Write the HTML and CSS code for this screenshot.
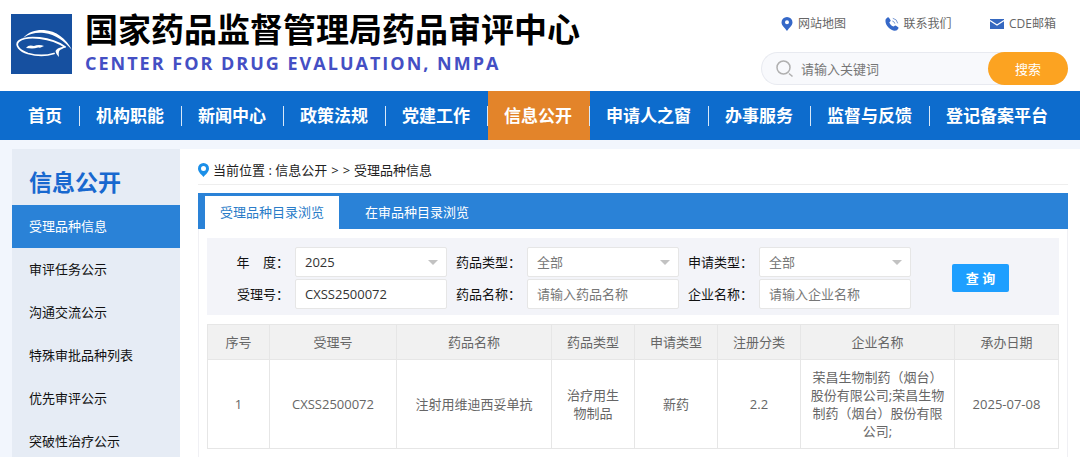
FILE: index.html
```html
<!DOCTYPE html>
<html lang="zh-CN">
<head>
    <meta charset="UTF-8">
    <meta name="viewport" content="width=device-width, initial-scale=1.0">
    <title>国家药品监督管理局药品审评中心</title>
    <link rel="stylesheet" href="styles.css">
</head>
<body>
    <header class="header">
        <div class="brand">
            <svg class="logo" viewBox="0 0 61 60">
                <rect width="61" height="60" fill="#1650a0"/>
                <path fill="#fff" d="M12 24C18 17 26 15.500 33 16C45 17 55 24 61 36C53 27 45 20.500 33 19C25 18.300 19 19.500 12 24z"/>
                <path fill="none" stroke="#fff" stroke-width="1.800" stroke-linecap="round" d="M54 33C40 23 16 21 8 27C3 31 9 37 17 39.500C26 42 35 42 43 39.500"/>
                <path fill="#fff" d="M55 32.500C51 32.500 46 34 44.500 37C45 39.500 46 41 48 43C47.500 40 47.500 37.500 49 36C51 35 53 34 55 32.500z"/>
                <path fill="#fff" d="M15 34C17 31 20 31 23 32C26 30.500 30 30.500 33 32C31 33 30 34 27 33.500C23 35 19 34.500 15 34z"/>
            </svg>
            <div class="brand-text">
                <h1>国家药品监督管理局药品审评中心</h1>
                <p>CENTER FOR DRUG EVALUATION, NMPA</p>
            </div>
        </div>
        <div class="tools">
            <div class="links">
                <a href="#"><svg width="12" height="14" viewBox="0 0 12 14"><path fill="#3568c8" fill-rule="evenodd" d="M6 0a5.500 5.500 0 0 1 5.500 5.500C11.500 8.500 8 11 6 14 4 11 .5 8.500 .5 5.500A5.500 5.500 0 0 1 6 0zm0 3.300a2 2 0 1 0 0 4 2 2 0 0 0 0-4z"/></svg>网站地图</a>
                <a href="#"><svg width="14" height="14" viewBox="0 0 14 14"><path fill="#3568c8" d="M.8 2L2.800 .3Q3.500 0 4 .7L5.600 3.200Q5.800 3.900 5.200 4.400L4.300 5.200C5 7.300 6.500 8.800 8.700 9.600L9.700 8.700Q10.300 8.300 11 8.700L13.200 10.200Q13.800 10.800 13.300 11.500L12 13.300C6.500 15.500-1.300 8 .8 2z"/><path fill="none" stroke="#7b9ad3" d="M7.300 4Q9.500 4.500 9.900 6.700M7.800 1.300Q12 2 12.700 6.300"/></svg>联系我们</a>
                <a href="#"><svg width="14" height="10" viewBox="0 0 14 10"><rect width="14" height="10" fill="#3568c0"/><path fill="none" stroke="#fff" stroke-width="1.200" d="M0 1.500L7 6 14 1.500"/></svg>CDE邮箱</a>
            </div>
            <form class="search">
                <svg width="18" height="18" viewBox="0 0 18 18" fill="none" stroke="#b0b0b0" stroke-width="1.500"><circle cx="7.500" cy="7.500" r="6.500"/><path d="M13 13.500L16.500 16.500"/></svg>
                <input type="text" placeholder="请输入关键词" aria-label="关键词">
                <button type="submit">搜索</button>
            </form>
        </div>
    </header>

    <nav class="nav">
        <a href="#">首页</a>
        <a href="#">机构职能</a>
        <a href="#">新闻中心</a>
        <a href="#">政策法规</a>
        <a href="#">党建工作</a>
        <a href="#" class="active">信息公开</a>
        <a href="#">申请人之窗</a>
        <a href="#">办事服务</a>
        <a href="#">监督与反馈</a>
        <a href="#">登记备案平台</a>
    </nav>

    <div class="main">
        <aside class="sidebar">
            <h2>信息公开</h2>
            <a href="#" class="active">受理品种信息</a>
            <a href="#">审评任务公示</a>
            <a href="#">沟通交流公示</a>
            <a href="#">特殊审批品种列表</a>
            <a href="#">优先审评公示</a>
            <a href="#">突破性治疗公示</a>
        </aside>
        <section class="content">
            <div class="crumb">
                <svg width="11" height="14" viewBox="0 0 11 14"><path fill="#1b8fe8" fill-rule="evenodd" d="M5.500 0A5.500 5.500 0 0 1 11 5.500C11 9 7.500 11.500 5.500 14 3.500 11.500 0 9 0 5.500A5.500 5.500 0 0 1 5.500 0zm0 3a2.500 2.500 0 1 0 0 5 2.500 2.500 0 0 0 0-5z"/></svg>
                <span>当前位置 : <a href="#">信息公开</a></span>
                <span>&gt;</span>
                <span>&gt;</span>
                <a href="#">受理品种信息</a>
            </div>
            <div class="panel">
                <div class="tabs">
                    <a href="#" class="active">受理品种目录浏览</a>
                    <a href="#">在审品种目录浏览</a>
                </div>
                <form class="filter">
                    <div class="fields">
                        <label for="year">年&nbsp;&nbsp;&nbsp;&nbsp;度：</label>
                        <div class="select"><select id="year"><option>2025</option></select></div>
                        <label for="drugType">药品类型：</label>
                        <div class="select"><select id="drugType" class="empty"><option>全部</option></select></div>
                        <label for="applyType">申请类型：</label>
                        <div class="select"><select id="applyType" class="empty"><option>全部</option></select></div>
                        <label for="acceptNo">受理号：</label>
                        <input type="text" id="acceptNo" value="CXSS2500072">
                        <label for="drugName">药品名称：</label>
                        <input type="text" id="drugName" placeholder="请输入药品名称">
                        <label for="company">企业名称：</label>
                        <input type="text" id="company" placeholder="请输入企业名称">
                    </div>
                    <button type="submit">查 询</button>
                </form>
                <table class="list">
                    <colgroup>
                        <col class="c-no"><col class="c-id"><col class="c-name"><col class="c-type"><col class="c-type"><col class="c-type"><col class="c-company"><col class="c-date">
                    </colgroup>
                    <thead>
                        <tr>
                            <th>序号</th>
                            <th>受理号</th>
                            <th>药品名称</th>
                            <th>药品类型</th>
                            <th>申请类型</th>
                            <th>注册分类</th>
                            <th>企业名称</th>
                            <th>承办日期</th>
                        </tr>
                    </thead>
                    <tbody>
                        <tr>
                            <td>1</td>
                            <td>CXSS2500072</td>
                            <td>注射用维迪西妥单抗</td>
                            <td>治疗用生物制品</td>
                            <td>新药</td>
                            <td>2.2</td>
                            <td>荣昌生物制药（烟台）股份有限公司;荣昌生物制药（烟台）股份有限公司;</td>
                            <td>2025-07-08</td>
                        </tr>
                    </tbody>
                </table>
            </div>
        </section>
    </div>
</body>
</html>
```
FILE: styles.css
```css
* {
    margin: 0;
    padding: 0;
    box-sizing: border-box;
}
body {
    font-family: "Open Sans", "Noto Sans CJK SC", sans-serif;
    font-size: 13px;
    line-height: 18px;
    color: #222;
    background-color: #f2f6fd;
}
a {
    color: inherit;
    text-decoration: none;
}
input, select, button {
    font: inherit;
    border: none;
    outline: none;
}
.header {
    display: flex;
    justify-content: space-between;
    padding: 12px 12px 6px 11px;
    background-color: #fff;
}
.brand {
    display: flex;
    gap: 13px;
}
.logo {
    width: 61px;
    height: 60px;
    margin-top: 2px;
}
.brand h1 {
    font-size: 33px;
    line-height: 36px;
    color: #000;
}
.brand p {
    font-size: 18px;
    line-height: 30px;
    font-weight: bold;
    letter-spacing: 2px;
    color: #444fc4;
}
.tools {
    display: flex;
    flex-direction: column;
    gap: 19px;
    width: 307px;
}
.links {
    display: flex;
    justify-content: space-between;
    padding: 3px 12px 0 20px;
    font-size: 12px;
    color: #666;
}
.links a {
    display: flex;
    align-items: center;
    gap: 5px;
}
.search {
    display: flex;
    align-items: center;
    height: 33px;
    padding-left: 14px;
    border: 1px solid #e8eaf0;
    border-right: none;
    border-radius: 17px;
    background-color: #f8f9fc;
}
.search input {
    flex: 1;
    min-width: 0;
    padding-left: 7px;
    background: none;
}
.search button {
    width: 80px;
    height: 33px;
    border-radius: 17px;
    background-color: #fca321;
    color: #fff;
}
::placeholder {
    color: #777;
    opacity: 1;
}
.nav {
    display: flex;
    padding-left: 12px;
    background-color: #0d6ccd;
    color: #fff;
    font-size: 17px;
    font-weight: bold;
    line-height: 49px;
}
.nav a {
    position: relative;
    padding: 0 18px 0 16px;
    white-space: nowrap;
}
.nav a:not(:last-child)::after {
    content: "";
    position: absolute;
    right: 0;
    top: 15px;
    width: 1px;
    height: 20px;
    background-color: #d8e8f8;
}
.nav a.active {
    background-color: #e3842a;
}
.main {
    display: flex;
    padding: 9px 0 0 12px;
}
.sidebar {
    width: 168px;
    background-color: #e6ecf5;
    color: #111;
}
.sidebar h2 {
    padding: 10px 17px 0;
    font-size: 23px;
    line-height: 46px;
    color: #1868cf;
}
.sidebar a {
    display: block;
    padding: 0 17px;
    line-height: 43px;
}
.sidebar a.active {
    background-color: #2a82d7;
    color: #fff;
}
.content {
    flex: 1;
    padding: 6px 12px 0 18px;
    background-color: #fff;
}
.crumb {
    display: flex;
    align-items: center;
    gap: 4px;
    height: 30px;
    border-bottom: 1px solid #eee;
}
.panel {
    margin-top: 8px;
    border: 1px solid #f0f0f4;
    border-top: none;
}
.tabs {
    display: flex;
    margin: 0 -1px;
    padding: 3px 7px 0;
    background-color: #2a82d7;
    color: #fff;
}
.tabs a {
    padding: 0 15px;
    line-height: 33px;
}
.tabs a.active {
    background-color: #fff;
    color: #2a7cc8;
}
.tabs a + a {
    margin-left: 11px;
}
.filter {
    display: flex;
    align-items: center;
    margin: 9px 8px;
    padding: 9px 50px 6px 16px;
    background-color: #f3f4f9;
}
.fields {
    flex: 1;
    display: grid;
    grid-template-columns: 72px 1fr 80px 1fr 80px 1fr;
    row-gap: 2px;
    align-items: center;
    margin-right: 41px;
}
.fields label {
    padding-right: 6px;
    text-align: right;
    color: #111;
    white-space: nowrap;
}
.fields input, .fields select {
    width: 100%;
    height: 30px;
    padding: 0 9px;
    border: 1px solid #e6e6e6;
    border-radius: 2px;
    background-color: #fff;
    color: #333;
}
.fields select {
    appearance: none;
}
.fields select.empty {
    color: #777;
}
.select {
    position: relative;
}
.select::after {
    content: "";
    position: absolute;
    right: 9px;
    top: 13px;
    border: 5px solid transparent;
    border-top-color: #c2c2c2;
    pointer-events: none;
}
.filter button {
    width: 57px;
    height: 28px;
    border-radius: 2px;
    background-color: #1e9fff;
    color: #fff;
    font-weight: bold;
}
.list {
    width: calc(100% - 16px);
    margin: 0 8px 12px;
    border-collapse: collapse;
    table-layout: fixed;
    color: #666;
    text-align: center;
}
.list th, .list td {
    border: 1px solid #e6e6e6;
    padding: 8px 9px;
}
.list th {
    padding: 8px 0;
    background-color: #f1f1f1;
    font-weight: normal;
}
.c-no { width: 62px; }
.c-id { width: 127px; }
.c-name { width: 155px; }
.c-type { width: 83px; }
.c-date { width: 104px; }
```
